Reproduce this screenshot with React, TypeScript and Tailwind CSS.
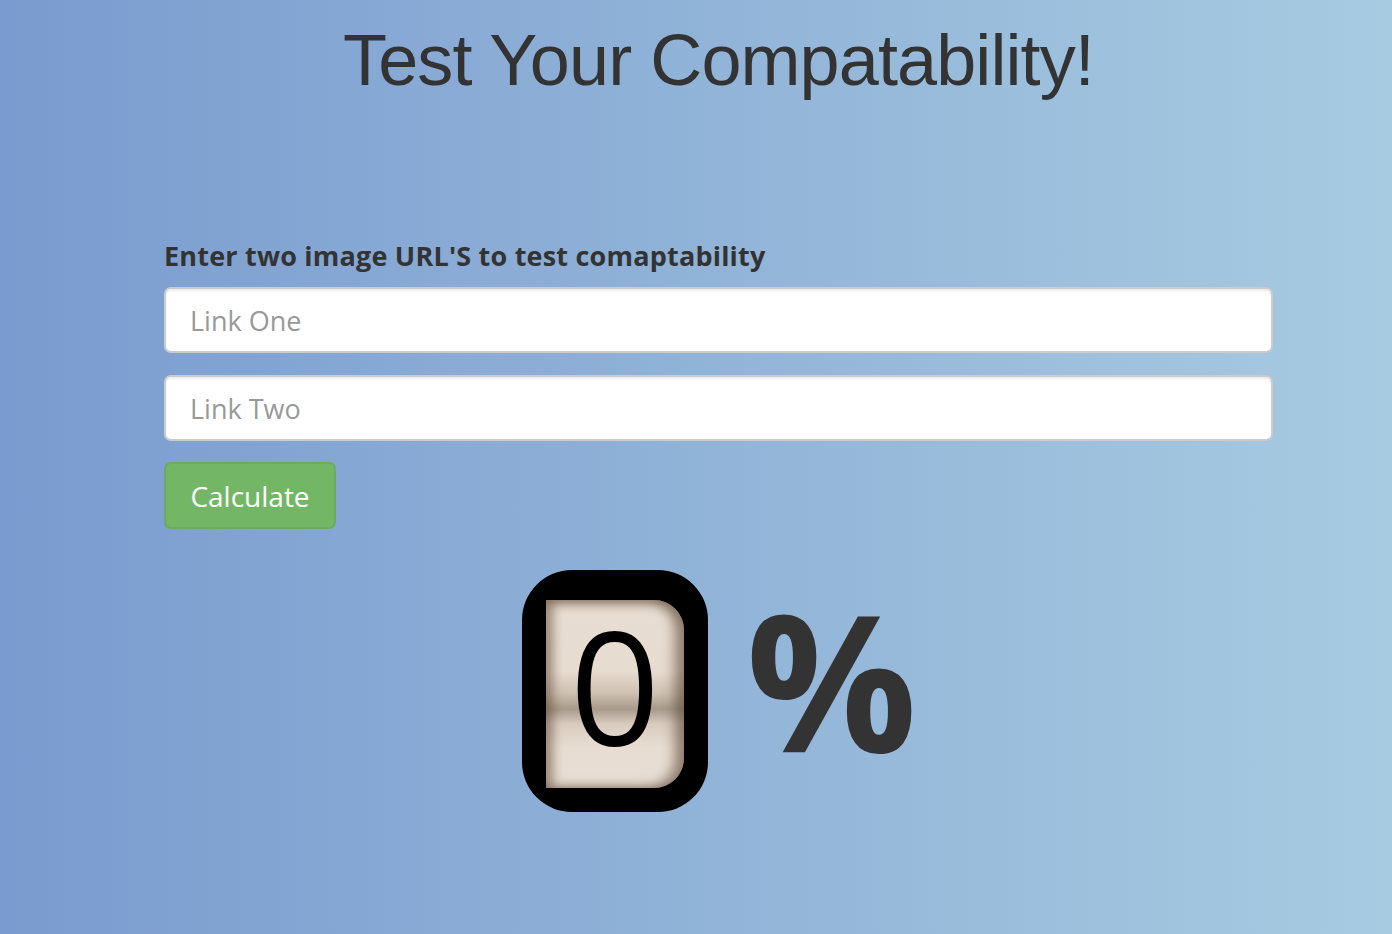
import { useState } from "react";

export default function App() {
  const [linkOne, setLinkOne] = useState("");
  const [linkTwo, setLinkTwo] = useState("");
  const [score] = useState(0);

  return (
    <div className="min-h-[934px] w-full bg-[linear-gradient(to_right,#7a9bcf,#a7cbe1)] font-['Open_Sans',sans-serif] text-[#333]">
      <div className="ml-[164px] w-[1109px]">
        <h1 className="pt-[20px] text-center font-['Liberation_Sans',Arial,sans-serif] text-[72px] leading-[80px] tracking-[-0.9px] text-[#333]">
          Test Your Compatability!
        </h1>

        <form className="mt-[138px]" onSubmit={(e) => e.preventDefault()}>
          <label className="block text-[27px] font-bold leading-[36px] tracking-[0.2px] text-[#333]">
            Enter two image URL'S to test comaptability
          </label>
          <input
            value={linkOne}
            onChange={(e) => setLinkOne(e.target.value)}
            placeholder="Link One"
            className="mt-[13px] block h-[66px] w-full rounded-[7px] border-2 border-[#ccc] bg-white px-[24px] text-[27px] text-[#555] shadow-[inset_0_2px_2px_rgba(0,0,0,0.08)] outline-none placeholder:text-[#999]"
          />
          <input
            value={linkTwo}
            onChange={(e) => setLinkTwo(e.target.value)}
            placeholder="Link Two"
            className="mt-[22px] block h-[66px] w-full rounded-[7px] border-2 border-[#ccc] bg-white px-[24px] text-[27px] text-[#555] shadow-[inset_0_2px_2px_rgba(0,0,0,0.08)] outline-none placeholder:text-[#999]"
          />
          <button
            type="submit"
            className="mt-[21px] block h-[67px] w-[172px] rounded-[7px] border-2 border-[#68ad5e] bg-[#73b766] text-[28px] text-white"
          >
            Calculate
          </button>
        </form>

        <div className="mt-[41px] flex items-start">
          <div className="ml-[358px] h-[242px] w-[186px] rounded-[50px] bg-black pt-[30px] pl-[24px]">
            <div className="flex h-[188px] w-[138px] items-center justify-center rounded-tr-[30px] rounded-br-[30px] bg-[linear-gradient(to_bottom,#e8ddd2_0%,#e7dcd0_38%,#cdbfb0_50%,#a89a8a_58%,#d8ccbf_66%,#e8ddd2_78%,#e8ddd2_100%)] shadow-[inset_8px_0_10px_rgba(90,70,50,0.45),inset_-10px_0_12px_rgba(90,70,50,0.55),inset_0_6px_8px_rgba(90,70,50,0.25)]">
              <span className="mb-[20px] font-['Open_Sans',sans-serif] text-[158px] font-normal leading-none text-black">
                {score}
              </span>
            </div>
          </div>
          <span className="ml-[38px] mt-[9px] font-['Open_Sans',sans-serif] text-[190px] font-bold leading-[200px] text-[#333]">
            %
          </span>
        </div>
      </div>
    </div>
  );
}
